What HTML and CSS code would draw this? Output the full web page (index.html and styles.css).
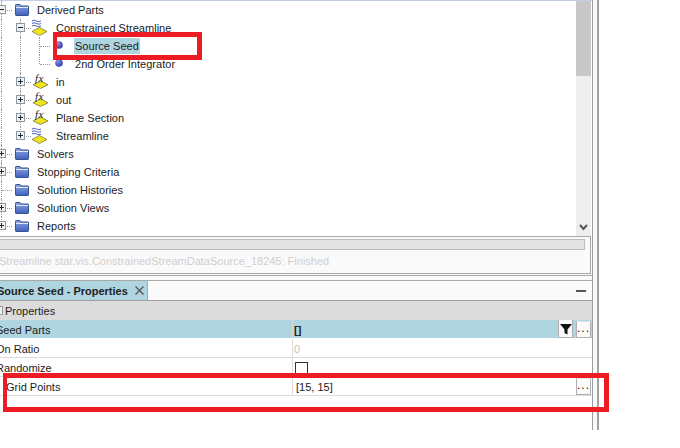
FILE: index.html
```html
<!DOCTYPE html>
<html lang="en">
<head>
<meta charset="utf-8">
<title>Source Seed - Properties</title>
<link rel="stylesheet" href="styles.css">
</head>
<body>
<svg class="defs" width="0" height="0" aria-hidden="true">
  <defs>
    <linearGradient id="fg" x1="0" y1="0" x2="0" y2="1"><stop offset="0" stop-color="#8fa6e0"/><stop offset="1" stop-color="#3f5fc0"/></linearGradient>
    <radialGradient id="bg" cx="0.35" cy="0.3" r="0.8"><stop offset="0" stop-color="#8a94e8"/><stop offset="1" stop-color="#2a2fa0"/></radialGradient>
    <symbol id="folder" viewBox="0 0 14 12">
      <path d="M.5 2.5V1.200Q.5.5 1.200.5H5L6 2H12.800Q13.500 2 13.500 2.700V10.800Q13.500 11.500 12.800 11.500H1.200Q.5 11.500.5 10.800Z" fill="url(#fg)" stroke="#33528f"/>
      <path d="M1 3.500H13" stroke="#dfe8fb" fill="none"/>
    </symbol>
    <symbol id="stream" viewBox="0 0 16 18">
      <path d="M0 2Q2 .5 4.500 2T9 2M0 4.500Q2 3 4.500 4.500T9 4.500M0 7Q2 5.500 4.500 7T9 7" fill="none" stroke="#4a5fc0"/>
      <path d="M7.500 8.500L15 12.500 7.500 16.500 0 12.500Z" fill="#f2e320" stroke="#7d7a30" stroke-width=".8"/>
    </symbol>
    <symbol id="fx" viewBox="0 0 16 18">
      <path d="M8.500 8L16 11.800 8.500 15.500 1 11.800Z" fill="#f2e320" stroke="#7d7a30" stroke-width=".8"/>
    </symbol>
    <symbol id="ball" viewBox="0 0 8 8">
      <circle cx="4" cy="4" r="3.800" fill="url(#bg)"/>
    </symbol>
  </defs>
</svg>
<div class="window">
  <div class="main">
    <section class="upper">
      <div class="tree-area">
        <div class="tree">
          <div class="row"><span class="toggle open tee"><i></i></span><span class="ico ico0"><svg class="folder"><use href="#folder"/></svg></span><span class="label">Derived Parts</span></div>
          <div class="row"><span class="guide"></span><span class="toggle open tee"><i></i></span><span class="ico ico1"><svg class="glyph"><use href="#stream"/></svg></span><span class="label">Constrained Streamline</span></div>
          <div class="row"><span class="guide"></span><span class="guide"></span><span class="toggle tee bare"></span><span class="ico ico2"><svg class="ball"><use href="#ball"/></svg></span><span class="label selected">Source Seed</span></div>
          <div class="row"><span class="guide"></span><span class="guide"></span><span class="toggle last bare"></span><span class="ico ico2"><svg class="ball"><use href="#ball"/></svg></span><span class="label">2nd Order Integrator</span></div>
          <div class="row"><span class="guide"></span><span class="toggle closed tee"><i></i></span><span class="ico ico1"><em class="fx">fx</em><svg class="glyph"><use href="#fx"/></svg></span><span class="label">in</span></div>
          <div class="row"><span class="guide"></span><span class="toggle closed tee"><i></i></span><span class="ico ico1"><em class="fx">fx</em><svg class="glyph"><use href="#fx"/></svg></span><span class="label">out</span></div>
          <div class="row"><span class="guide"></span><span class="toggle closed tee"><i></i></span><span class="ico ico1"><em class="fx">fx</em><svg class="glyph"><use href="#fx"/></svg></span><span class="label">Plane Section</span></div>
          <div class="row"><span class="guide"></span><span class="toggle closed last"><i></i></span><span class="ico ico1"><svg class="glyph"><use href="#stream"/></svg></span><span class="label">Streamline</span></div>
          <div class="row"><span class="toggle closed tee"><i></i></span><span class="ico ico0"><svg class="folder"><use href="#folder"/></svg></span><span class="label">Solvers</span></div>
          <div class="row"><span class="toggle closed tee"><i></i></span><span class="ico ico0"><svg class="folder"><use href="#folder"/></svg></span><span class="label">Stopping Criteria</span></div>
          <div class="row"><span class="toggle tee bare"></span><span class="ico ico0"><svg class="folder"><use href="#folder"/></svg></span><span class="label">Solution Histories</span></div>
          <div class="row"><span class="toggle closed tee"><i></i></span><span class="ico ico0"><svg class="folder"><use href="#folder"/></svg></span><span class="label">Solution Views</span></div>
          <div class="row"><span class="toggle closed last"><i></i></span><span class="ico ico0"><svg class="folder"><use href="#folder"/></svg></span><span class="label">Reports</span></div>
        </div>
        <div class="scrollbar">
          <div class="thumb"></div>
          <div class="track"><svg class="chev" width="9" height="7" viewBox="0 0 9 7"><path d="M1 1L4.500 5 8 1" fill="none" stroke="#555" stroke-width="2"/></svg></div>
        </div>
      </div>
      <div class="status">
        <div class="progress"></div>
        <div class="status-text">Streamline star.vis.ConstrainedStreamDataSource_18245: Finished</div>
      </div>
    </section>
    <section class="props">
      <header class="tabbar">
        <div class="tab"><span class="tab-title">Source Seed - Properties</span><svg class="tab-x" width="9" height="9" viewBox="0 0 9 9"><path d="M.5.5L8.500 8.500M8.500.5L.5 8.500" stroke="#555" stroke-width="1.300" fill="none"/></svg></div>
        <span class="minimize"></span>
      </header>
      <div class="group"><span class="group-box"></span><span>Properties</span></div>
      <div class="prop prop-active">
        <div class="pname cut">Seed Parts</div>
        <div class="pval"><span class="empty">[]</span>
          <span class="filter"><svg width="12" height="12" viewBox="0 0 12 12"><path d="M0 1H12L7.500 6.500V11.500L4.500 10V6.500Z" fill="#111"/></svg></span>
          <span class="more">...</span>
        </div>
      </div>
      <div class="prop"><div class="pname cut">On Ratio</div><div class="pval muted"><span class="zero">0</span></div></div>
      <div class="prop"><div class="pname cut">Randomize</div><div class="pval"><span class="check"></span></div></div>
      <div class="prop"><div class="pname indent">Grid Points</div><div class="pval">[15, 15]<span class="more solo">...</span></div></div>
    </section>
  </div>
  <div class="sash"></div>
</div>
<div class="mark mark-seed"></div>
<div class="mark mark-grid"></div>
</body>
</html>
```

FILE: styles.css
```css
* { box-sizing: border-box; }
html, body { margin: 0; padding: 0; background: #fff; }
body {
  width: 680px; height: 448px; overflow: hidden; position: relative;
  font: 11px/18px "Liberation Sans", Arial, sans-serif; color: #1c1c1c;
}
.defs { position: absolute; }
.window { display: flex; width: 599px; height: 430px; background: #fafafa; }
.main { width: 593px; border-right: 1px solid #9c9ca4; display: flex; flex-direction: column; }
.sash { width: 6px; background: #fafafa; border-right: 2px solid #a2a2a2; }

.upper { height: 276px; border-bottom: 1px solid #a8a8a8; background: #fafafa; display: flex; flex-direction: column; }
.tree-area { height: 236px; display: flex; background: #fff; border-top: 1px solid #c3cfe0; }
.tree { flex: 1; margin-left: -8px; min-width: 0; }
.row { display: flex; height: 18px; align-items: center; }
.guide, .toggle { width: 19px; height: 18px; flex: none; position: relative; }
.guide::before, .toggle::before {
  content: ""; position: absolute; left: 9px; top: 0; bottom: 0;
  border-left: 1px dotted #9a9a9a;
}
.toggle.last::before { bottom: 9px; }
.toggle::after {
  content: ""; position: absolute; left: 10px; top: 9px; width: 10px;
  border-top: 1px dotted #9a9a9a;
}
.toggle i {
  position: absolute; z-index: 1; left: 5px; top: 4px; width: 9px; height: 9px;
  border: 1px solid #8c97a0; background: #f0f2f2;
}
.toggle i::before {
  content: ""; position: absolute; left: 1px; top: 3px; width: 5px; height: 1px; background: #1b2a3a;
}
.toggle.closed i::after {
  content: ""; position: absolute; left: 3px; top: 1px; width: 1px; height: 5px; background: #1b2a3a;
}
.ico { width: 26px; height: 18px; flex: none; display: flex; align-items: center; position: relative; }
.ico0 { padding-left: 4px; }
.ico1 { padding-left: 2px; }
.ico2 { padding-left: 6px; }
.folder { width: 14px; height: 12px; }
.glyph { width: 16px; height: 18px; }
.ball { width: 8px; height: 8px; margin-top: -2px; }
.fx {
  position: absolute; left: 5px; top: 0;
  font: italic 11px/10px "Liberation Serif", serif; color: #222; letter-spacing: .5px;
}
.label { white-space: nowrap; letter-spacing: .02px; }
.selected { background: #aed5e0; height: 16px; line-height: 16px; padding: 0 1px; margin-left: -1px; }

.scrollbar { width: 15px; margin-right: 1px; flex: none; background: #eee; display: flex; flex-direction: column; }
.thumb { height: 75px; background: #c8c8c8; }
.track { flex: 1; display: flex; align-items: flex-end; justify-content: center; padding-bottom: 5px; }

.status { flex: 1; margin: 0 1px 1px 0; border: 1px solid #a8a8a8; border-left: 0; padding-top: 2px; }
.progress { height: 11px; margin-right: 5px; background: #e4e4e4; border: 1px solid #bcbcbc; border-left: 0; }
.status-text { color: #cfcfcf; margin-left: -1px; margin-top: 2px; white-space: nowrap; line-height: 18px; }

.props { margin-top: 4px; flex: 1; background: #fff; border-top: 1px solid #a8a8a8; }
.tabbar { height: 20px; display: flex; align-items: stretch; justify-content: space-between; border-bottom: 1px solid #a0a0a0; background: #fafafa; }
.tab { width: 148px; background: #aed5e0; border-right: 1px solid #a8a8a8; display: flex; align-items: center; white-space: nowrap; }
.tab-title { font-weight: 700; color: #222; margin-left: -3px; }
.tab-x { margin-left: 7px; }
.minimize { width: 10px; height: 2px; background: #555; align-self: center; margin-right: 6px; }

.group { height: 19px; background: #dcdcdc; display: flex; align-items: center; white-space: nowrap; }
.group-box { width: 6px; height: 9px; margin-left: -3px; margin-right: 2px; border: 1px solid #9a9a9a; background: #eee; }
.prop { display: flex; height: 19px; border-bottom: 1px solid #dcdcdc; background: #fff; }
.prop-active { background: #aed5e0; border-bottom-color: #fff; }
.pname { width: 293px; border-right: 1px solid #dcdcdc; white-space: nowrap; line-height: 20px; }
.cut { margin-left: -4px; width: 297px; }
.indent { padding-left: 6px; }
.pval { flex: 1; display: flex; align-items: center; padding: 2px 0 0 3px; position: relative; }
.muted { color: #c2c2c2; }
.empty { font-weight: 700; margin-left: -2px; }
.zero { margin-left: -2px; }
.filter {
  position: absolute; right: 19px; top: 0; width: 15px; height: 18px;
  background: #fafafa; border: 1px solid #b0b0b0; border-top: 0;
  display: flex; align-items: center; justify-content: center;
}
.more {
  position: absolute; right: 1px; top: 1px; width: 15px; height: 17px;
  background: #fafafa; border: 1px solid #b0b0b0; border-top-color: #e4e4e4;
  text-align: center; font-size: 12px; line-height: 13px; color: #222; letter-spacing: 1px;
}
.check { width: 13px; height: 13px; margin: 1px 0 0 -1px; border: 1px solid #333; background: #fff; }

.mark { position: absolute; border: 5px solid #ed1c24; border-left-width: 4px; pointer-events: none; }
.mark-seed { left: 53px; top: 32px; width: 149px; height: 28px; }
.mark-grid { left: 3px; top: 373px; width: 606px; height: 39px; }
```
